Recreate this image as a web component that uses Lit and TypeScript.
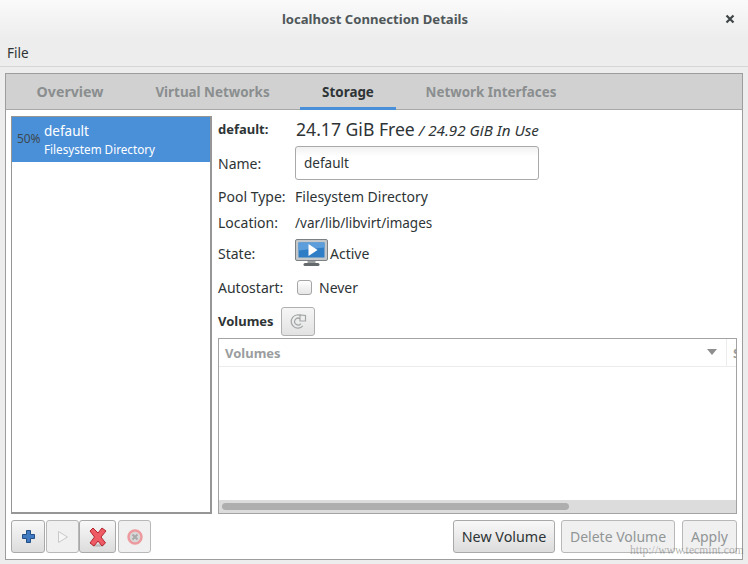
import { LitElement, html, css } from "lit";
import { customElement } from "lit/decorators.js";

@customElement("app-root")
export class AppRoot extends LitElement {
  static styles = css`
    :host { display: block; width: 748px; height: 564px; overflow: hidden; position: relative; background: #ededed; color: #2e3436;
      font-family: "Noto Sans", "Open Sans", sans-serif; font-size: 14px; }
    * { box-sizing: border-box; }
    .title { height: 38px; display: flex; align-items: center; justify-content: center; position: relative; font-weight: 700; font-size: 13.1px; color: #4f5759; padding-left: 2px;
      background: linear-gradient(#fafafa, #ededed); }
    .close { position: absolute; left: 725px; top: 14px; width: 10px; height: 10px; }
    .menu { height: 29px; padding: 6px 7px 0; border-bottom: 1px solid #d5d5d5; font-size: 13.5px; line-height: 18px; color: #2e3436; }
    .book { margin: 6px 5px 0; height: 487px; border: 1px solid #9d9d9d; display: flex; flex-direction: column; background: #ededed; }
    .tabs { height: 36px; background: #d1d1d1; border-bottom: 1px solid #a8a8a8; display: flex; gap: 8px; padding-left: 9px; flex: none; }
    .tab { height: 35px; line-height: 36px; text-align: center; font-weight: 700; font-size: 13.4px; color: #8a8e8f; white-space: nowrap; }
    .tab.on { color: #2e3436; border-bottom: 3px solid #4a90d9; height: 36px; }
    .t1 { width: 110px; font-size: 14.2px; }
    .t2 { width: 159px; }
    .t3 { width: 96px; }
    .t4 { width: 174px; }
    .body { flex: 1; background: #fff; padding: 6px 5px 5px; display: flex; flex-direction: column; }
    .main { display: flex; height: 398px; flex: none; }
    .list { width: 201px; flex: none; border: 1px solid #969696; border-width: 1px 2px 2px 1px; background: #fff; }
    .sel { height: 45px; background: #4a90d9; color: #fff; display: flex; }
    .pct { width: 32px; padding: 14px 0 0 5px; font-size: 12px; line-height: 16px; color: #3d4850; letter-spacing: -0.1px; }
    .sel .n { font-size: 13.5px; line-height: 18px; margin-top: 5px; }
    .sel .d { font-size: 11.7px; line-height: 16px; margin-top: 1px; }
    .detail { flex: 1; padding-left: 6px; display: flex; flex-direction: column; min-width: 0; }
    .head { height: 26px; display: flex; align-items: center; }
    .head b { width: 78px; font-size: 13px; }
    .free { font-size: 17.6px; }
    .use { font-style: italic; font-size: 15.2px; margin-left: 4px; margin-top: 1px; }
    .row { display: flex; align-items: center; }
    .lbl { width: 77px; flex: none; }
    .input { width: 244px; height: 34px; border: 1px solid #a9a9a9; border-radius: 3px; padding-left: 8px; line-height: 32px; font-size: 13.5px; color: #2e3436;
      background: linear-gradient(#f1f1f1, #fff 30%); }
    .r-name { height: 34px; margin-top: 4px; }
    .r-type { height: 25px; margin-top: 4px; }
    .r-loc { height: 25px; margin-top: 1px; }
    .r-state { height: 30px; margin-top: 3px; }
    .r-auto { height: 22px; margin-top: 8px; }
    .r-vol { height: 30px; margin-top: 8px; }
    .loc { font-size: 13.5px; }
    .cb { width: 15px; height: 15px; margin-left: 2px; margin-right: 7px; border: 1px solid #a5a5a5; border-radius: 3px; background: linear-gradient(#fff, #e6e6e6); }
    .mon { display: block; margin-right: 2px; }
    .refresh { width: 34px; height: 29px; margin-left: 8px; border: 1px solid #b0b0b0; border-radius: 3px; background: linear-gradient(#f6f6f6, #e2e2e2); display: flex; align-items: center; justify-content: center; }
    .r-vol b { font-size: 13px; width: 55px; }
    .table { margin-top: 2px; height: 176px; border: 1px solid #a3a3a3; display: flex; flex-direction: column; background: #fff; position: relative; }
    .th { height: 28px; flex: none; border-bottom: 1px solid #ececec; display: flex; align-items: center; padding-left: 6px; padding-top: 1px; font-weight: 700; font-size: 13px; color: #9a9d9e; position: relative; }
    .arrow { position: absolute; left: 488px; top: 10px; width: 0; height: 0; border: 5.5px solid transparent; border-top: 6px solid #8e8e8e; border-bottom: 0; }
    .div { position: absolute; left: 507px; top: 0; bottom: 0; width: 1px; background: #ececec; }
    .s2 { position: absolute; left: 514px; top: 5px; width: 4px; overflow: hidden; }
    .tb { flex: 1; }
    .sb { height: 13px; flex: none; background: #dcdcdc; padding: 3px 0 0 3px; }
    .thumb { width: 347px; height: 7px; border-radius: 4px; background: #aeaeae; }
    .foot { display: flex; margin-top: 6px; height: 33px; }
    .btn { height: 33px; border: 1px solid #a9a9a9; border-radius: 3px; background: linear-gradient(#f8f8f8, #dcdcdc); display: flex; align-items: center; justify-content: center; font-size: 14px; color: #2e3436; white-space: nowrap; }
    .btn.dis { background: #f0f0f0; color: #919596; border-color: #b8b8b8; }
    .b-add { width: 34px; }
    .b-play { width: 33px; margin-left: 1px; }
    .b-del { width: 37px; }
    .b-stop { width: 33px; margin-left: 2px; }
    .b-new { width: 102px; margin-right: 6px; font-size: 14.3px; }
    .b-rm { width: 114px; margin-right: 7px; }
    .b-ap { width: 55px; }
    .sp { flex: 1; }
    .wm { position: absolute; left: 630px; top: 544px; font-family: "Liberation Serif", serif; font-size: 11.5px; color: rgba(120,120,120,0.55); white-space: nowrap; letter-spacing: 0.1px; }
  `;

  render() {
    return html`
      <div class="title">localhost Connection Details
        <svg class="close" viewBox="0 0 10 10"><path d="M1.5 1.5 8.5 8.5M8.5 1.5 1.5 8.5" stroke="#3f4648" stroke-width="2.2" fill="none"/></svg>
      </div>
      <div class="menu">File</div>
      <div class="book">
        <div class="tabs">
          <div class="tab t1">Overview</div>
          <div class="tab t2">Virtual Networks</div>
          <div class="tab t3 on">Storage</div>
          <div class="tab t4">Network Interfaces</div>
        </div>
        <div class="body">
          <div class="main">
            <div class="list">
              <div class="sel">
                <div class="pct">50%</div>
                <div><div class="n">default</div><div class="d">Filesystem Directory</div></div>
              </div>
            </div>
            <div class="detail">
              <div class="head"><b>default:</b><span class="free">24.17 GiB Free</span><span class="use">/ 24.92 GiB In Use</span></div>
              <div class="row r-name"><span class="lbl">Name:</span><div class="input">default</div></div>
              <div class="row r-type"><span class="lbl">Pool Type:</span>Filesystem Directory</div>
              <div class="row r-loc"><span class="lbl">Location:</span><span class="loc">/var/lib/libvirt/images</span></div>
              <div class="row r-state"><span class="lbl">State:</span>
                <svg class="mon" width="33" height="28" viewBox="0 0 33 28">
                  <rect x="0.5" y="0.5" width="32" height="21" rx="1.500" fill="#c4c8ca" stroke="#7c8082"/>
                  <rect x="3.500" y="3.500" width="26" height="15" fill="#2f7dc4"/>
                  <path d="M3.500 3.500h26v5l-26 3z" fill="#5b9edb"/>
                  <path d="M13.500 5v12l9-6z" fill="#fff"/>
                  <rect x="12.500" y="22" width="8" height="3" fill="#9a9d9f"/>
                  <rect x="8.500" y="24" width="16" height="3" rx="1.500" fill="#66696b"/>
                </svg>Active</div>
              <div class="row r-auto"><span class="lbl">Autostart:</span><span class="cb"></span>Never</div>
              <div class="row r-vol"><b>Volumes</b>
                <div class="refresh">
                  <svg width="17" height="17" viewBox="0 0 17 17" fill="none" stroke="#a3a6a7" stroke-width="1.200">
                    <path d="M12.800 12.800A6.600 6.600 0 1 1 11.500 3"/>
                    <path d="M10.800 10.600A3.400 3.400 0 1 1 10 5.800"/>
                    <path d="M10 2v6h5.500V2.500z" fill="#eeeeee"/>
                  </svg>
                </div>
              </div>
              <div class="table">
                <div class="th">Volumes<span class="arrow"></span><span class="div"></span><span class="s2">S</span></div>
                <div class="tb"></div>
                <div class="sb"><div class="thumb"></div></div>
              </div>
            </div>
          </div>
          <div class="foot">
            <div class="btn b-add">
              <svg width="15" height="15" viewBox="0 0 15 15"><path d="M5.500 1.500h4v4h4v4h-4v4h-4v-4h-4v-4h4z" fill="#3f79bf" stroke="#234f88"/></svg>
            </div>
            <div class="btn dis b-play">
              <svg width="12" height="14" viewBox="0 0 12 14"><path d="M1.500 1.500v11l9-5.500z" fill="#f6f6f6" stroke="#c9c9c9"/></svg>
            </div>
            <div class="btn b-del">
              <svg width="18" height="20" viewBox="0 0 18 20"><ellipse cx="9" cy="18.500" rx="6" ry="1.300" fill="#bdbdbd"/><path d="M4 1 9 6l4-5 4 3-5 6 4.500 6-3.500 3L9 14l-4 5-4-3 4.500-6L1 4z" fill="#ef5b64" stroke="#b3262e"/></svg>
            </div>
            <div class="btn dis b-stop">
              <svg width="16" height="16" viewBox="0 0 16 16"><circle cx="8" cy="8" r="6.500" fill="#d8d8d8" stroke="#ec9a9e" stroke-width="2.500"/><path d="M5.500 5.500l5 5M10.500 5.500l-5 5" stroke="#a8a8a8" stroke-width="2"/></svg>
            </div>
            <div class="sp"></div>
            <div class="btn b-new">New Volume</div>
            <div class="btn dis b-rm">Delete Volume</div>
            <div class="btn dis b-ap">Apply</div>
          </div>
        </div>
      </div>
      <div class="wm">http://www.tecmint.com</div>
    `;
  }
}
